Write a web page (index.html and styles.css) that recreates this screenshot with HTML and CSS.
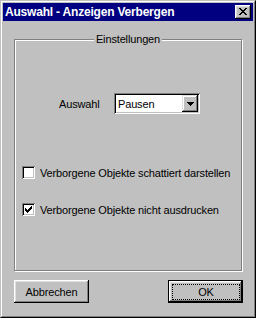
FILE: index.html
```html
<!DOCTYPE html>
<html lang="de">
<head>
<meta charset="utf-8">
<title>Auswahl - Anzeigen Verbergen</title>
<link rel="stylesheet" href="styles.css">
</head>
<body>
<div class="window">
  <div class="frame">
    <div class="titlebar">
      <span class="title">Auswahl - Anzeigen Verbergen</span>
      <div class="close">
        <svg width="8" height="7" viewBox="0 0 8 7" shape-rendering="crispEdges">
          <path fill="#000" d="M0 0h2v1h-2z M6 0h2v1h-2z M1 1h2v1h-2z M5 1h2v1h-2z M2 2h4v1h-4z M3 3h2v1h-2z M2 4h4v1h-4z M1 5h2v1h-2z M5 5h2v1h-2z M0 6h2v1h-2z M6 6h2v1h-2z"/>
        </svg>
      </div>
    </div>
    <div class="content">
      <div class="group">
        <div class="legend"><span>Einstellungen</span></div>
        <div class="select-row">
          <span class="label">Auswahl</span>
          <div class="combo">
            <span class="combo-text">Pausen</span>
            <div class="combo-btn">
              <svg width="7" height="4" viewBox="0 0 7 4" shape-rendering="crispEdges">
                <path fill="#000" d="M0 0h7v1h-1v1h-1v1h-1v1h-1v-1h-1v-1h-1v-1h-1z"/>
              </svg>
            </div>
          </div>
        </div>
        <div class="check-row first">
          <div class="checkbox"></div>
          <span>Verborgene Objekte schattiert darstellen</span>
        </div>
        <div class="check-row second">
          <div class="checkbox">
            <svg width="7" height="7" viewBox="0 0 7 7" shape-rendering="crispEdges">
              <path fill="#000" d="M0 2h1v3h-1z M1 3h1v3h-1z M2 4h1v3h-1z M3 3h1v3h-1z M4 2h1v3h-1z M5 1h1v3h-1z M6 0h1v3h-1z"/>
            </svg>
          </div>
          <span>Verborgene Objekte nicht ausdrucken</span>
        </div>
      </div>
      <div class="buttons">
        <div class="btn">Abbrechen</div>
        <div class="btn default"><div class="focus">OK</div></div>
      </div>
    </div>
  </div>
</div>
</body>
</html>
```
FILE: styles.css
```css
html, body {
  margin: 0;
  padding: 0;
  background: #c0c0c0;
}
body {
  font-family: "Liberation Sans", Arial, sans-serif;
  font-size: 11px;
  letter-spacing: -0.15px;
  color: #000;
}
.window {
  width: 256px;
  height: 318px;
  box-sizing: border-box;
  border: 1px solid;
  border-color: #c0c0c0 #000 #000 #c0c0c0;
  background: #c0c0c0;
}
.frame {
  height: 100%;
  box-sizing: border-box;
  border: 1px solid;
  border-color: #fff #808080 #808080 #fff;
  padding: 1px;
  display: flex;
  flex-direction: column;
}
.titlebar {
  height: 18px;
  background: #000080;
  display: flex;
  align-items: center;
  padding: 0 2px 0 2px;
  color: #fff;
}
.title {
  font-weight: bold;
  font-size: 12px;
  letter-spacing: -0.2px;
}
.close {
  margin-left: auto;
  width: 16px;
  height: 14px;
  box-sizing: border-box;
  background: #c0c0c0;
  box-shadow: inset -1px -1px #000, inset 1px 1px #fff, inset -2px -2px #808080, inset 2px 2px #dfdfdf;
  display: flex;
  align-items: center;
  justify-content: center;
  padding-bottom: 1px;
}
.content {
  padding: 18px 0 0 11px;
}
.group {
  position: relative;
  width: 228px;
  height: 232px;
  box-sizing: border-box;
  border: 1px solid #808080;
  box-shadow: 1px 1px 0 #fff, inset 1px 1px 0 #fff;
  padding-top: 53px;
}
.legend {
  position: absolute;
  top: -7px;
  left: 0;
  right: 0;
  text-align: center;
  line-height: 13px;
}
.legend span {
  background: #c0c0c0;
  padding: 0 2px;
}
.select-row {
  display: flex;
  align-items: center;
  margin-left: 44px;
  height: 21px;
}
.label {
  width: 55px;
}
.combo {
  width: 86px;
  height: 21px;
  box-sizing: border-box;
  background: #fff;
  box-shadow: inset 1px 1px #808080, inset -1px -1px #fff, inset 2px 2px #000, inset -2px -2px #c0c0c0;
  padding: 2px;
  display: flex;
  align-items: center;
}
.combo-text {
  flex: 1;
  padding-left: 2px;
}
.combo-btn {
  width: 16px;
  height: 17px;
  box-sizing: border-box;
  background: #c0c0c0;
  box-shadow: inset -1px -1px #000, inset 1px 1px #dfdfdf, inset -2px -2px #808080, inset 2px 2px #fff;
  display: flex;
  align-items: center;
  justify-content: center;
}
.check-row {
  display: flex;
  align-items: center;
  margin-left: 7px;
  height: 13px;
  gap: 5px;
}
.check-row.first {
  margin-top: 52px;
}
.check-row.second {
  margin-top: 24px;
}
.checkbox {
  width: 13px;
  height: 13px;
  box-sizing: border-box;
  background: #fff;
  box-shadow: inset 1px 1px #808080, inset -1px -1px #fff, inset 2px 2px #000, inset -2px -2px #c0c0c0;
  display: flex;
  align-items: center;
  justify-content: center;
}
.buttons {
  display: flex;
  justify-content: space-between;
  width: 229px;
  margin-top: 9px;
}
.btn {
  width: 75px;
  height: 23px;
  box-sizing: border-box;
  background: #c0c0c0;
  box-shadow: inset -1px -1px #000, inset 1px 1px #fff, inset -2px -2px #808080, inset 2px 2px #dfdfdf;
  display: flex;
  align-items: center;
  justify-content: center;
}
.btn.default {
  border: 1px solid #000;
  padding: 3px 2px 2px 3px;
}
.focus {
  flex: 1;
  align-self: stretch;
  border: 1px dotted #000;
  display: flex;
  align-items: center;
  justify-content: center;
}
```
